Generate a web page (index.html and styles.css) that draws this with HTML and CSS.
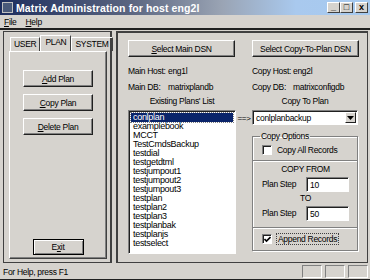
FILE: index.html
```html
<!DOCTYPE html>
<html lang="en">
<head>
    <meta charset="UTF-8">
    <title>Matrix Administration</title>
    <link rel="stylesheet" href="styles.css">
</head>
<body>
<div class="window">
    <div class="titlebar">
        <span class="app-icon"></span>
        <span class="title">Matrix Administration for host eng2l</span>
        <span class="controls">
            <span class="ctl">_</span><span class="ctl">&#9633;</span><span class="ctl ctl-close">x</span>
        </span>
    </div>
    <div class="menubar">
        <span><u>F</u>ile</span>
        <span><u>H</u>elp</span>
    </div>
    <div class="main">
        <div class="left-panel">
            <div class="tabs">
                <span class="tab">USER</span>
                <span class="tab active">PLAN</span>
                <span class="tab">SYSTEM</span>
            </div>
            <div class="tab-body">
                <div class="btn-stack">
                    <button class="btn"><u>A</u>dd Plan</button>
                    <button class="btn"><u>C</u>opy Plan</button>
                    <button class="btn"><u>D</u>elete Plan</button>
                </div>
                <button class="btn btn-exit">E<u>x</u>it</button>
            </div>
        </div>
        <div class="right-panel">
            <div class="col col-main">
                <button class="btn btn-dsn"><u>S</u>elect Main DSN</button>
                <div class="info"><span class="lbl">Main Host:</span><span>eng1l</span></div>
                <div class="info"><span class="lbl">Main DB:</span><span>matrixplandb</span></div>
                <div class="caption">Existing Plans' List</div>
                <div class="listbox">
                    <div class="item selected">conlplan</div>
                    <div class="item">examplebook</div>
                    <div class="item">MCCT</div>
                    <div class="item">TestCmdsBackup</div>
                    <div class="item">testdial</div>
                    <div class="item">testgetdtml</div>
                    <div class="item">testjumpout1</div>
                    <div class="item">testjumpout2</div>
                    <div class="item">testjumpout3</div>
                    <div class="item">testplan</div>
                    <div class="item">testplan2</div>
                    <div class="item">testplan3</div>
                    <div class="item">testplanbak</div>
                    <div class="item">testplanjs</div>
                    <div class="item">testselect</div>
                </div>
            </div>
            <div class="arrow">==&gt;</div>
            <div class="col col-copy">
                <button class="btn btn-dsn">Select Copy-To-Plan DSN</button>
                <div class="info"><span class="lbl lbl-copy">Copy Host:</span><span>eng2l</span></div>
                <div class="info"><span class="lbl lbl-copy">Copy DB:</span><span>matrixconfigdb</span></div>
                <div class="caption">Copy To Plan</div>
                <div class="combo">
                    <span class="combo-text">conlplanbackup</span>
                    <span class="combo-btn"><svg width="7" height="4" viewBox="0 0 7 4"><path d="M0 0h7L3.5 4z" fill="#000"/></svg></span>
                </div>
                <fieldset class="group">
                    <legend>Copy Options</legend>
                    <label class="check"><span class="box"></span>Copy All Records</label>
                    <div class="inner">
                        <div class="inner-title">COPY FROM</div>
                        <div class="step"><span>Plan Step</span><span class="field">10</span></div>
                        <div class="inner-title">TO</div>
                        <div class="step"><span>Plan Step</span><span class="field">50</span></div>
                    </div>
                    <label class="check check-append"><span class="box"><svg width="7" height="7" viewBox="0 0 7 7"><path d="M0.5 3l2 2 4-4" fill="none" stroke="#000" stroke-width="1.6"/></svg></span><span class="focus">Append Records</span></label>
                </fieldset>
            </div>
        </div>
    </div>
    <div class="statusbar">
        <span class="status-text">For Help, press F1</span>
        <span class="pane"></span><span class="pane"></span><span class="pane"></span>
    </div>
</div>
</body>
</html>
```
FILE: styles.css
```css
body {
    margin: 0;
    font-family: "Liberation Sans", Arial, sans-serif;
    font-size: 8.5px;
    color: #000;
}
.window {
    width: 370px;
    height: 280px;
    background-color: #d6d3ce;
    display: flex;
    flex-direction: column;
    overflow: hidden;
    box-sizing: border-box;
    border-bottom: 1px solid #202020;
    white-space: nowrap;
    letter-spacing: -0.3px;
}
.titlebar {
    flex-shrink: 0;
    height: 15px;
    display: flex;
    align-items: center;
    padding: 0 2px;
    background: linear-gradient(to right, #1d2d5e, #5a6580 35%, #9aa4b4 60%, #a9c9ee 80%, #a6caf0);
    color: #fff;
    font-weight: bold;
    font-size: 10.5px;
    letter-spacing: 0.1px;
}
.app-icon {
    width: 11px;
    height: 11px;
    background: #4a5a7a;
    border: 1px solid #c0c0c0;
    box-sizing: border-box;
    margin-right: 3px;
}
.title {
    flex: 1;
}
.controls {
    display: flex;
}
.ctl {
    width: 13px;
    height: 11px;
    background: #d6d3ce;
    border: 1px solid;
    border-color: #fff #404040 #404040 #fff;
    box-sizing: border-box;
    color: #000;
    font-size: 9px;
    line-height: 8px;
    text-align: center;
}
.ctl-close {
    margin-left: 2px;
}
.menubar {
    flex-shrink: 0;
    height: 13px;
    display: flex;
    align-items: center;
    gap: 9px;
    padding-left: 4px;
    border-bottom: 2px solid #202020;
}
.main {
    flex: 1;
    min-height: 0;
    display: flex;
    gap: 4px;
    padding: 1px 2px 1px 3px;
}
.left-panel {
    width: 109px;
    flex-shrink: 0;
    border: 1px solid #404040;
    border-right-width: 2px;
    box-sizing: border-box;
    padding: 4px 3px 3px 5px;
    display: flex;
    flex-direction: column;
}
.tabs {
    display: flex;
    height: 15px;
    align-items: flex-end;
    padding-left: 1px;
}
.tab {
    height: 13px;
    padding: 0 3px;
    border: 1px solid #fff;
    border-right-color: #404040;
    border-bottom: none;
    line-height: 13px;
}
.tab.active {
    height: 15px;
    padding: 0 4px;
}
.tab-body {
    flex: 1;
    border: 1px solid #404040;
    border-top-color: #fff;
    border-left-color: #fff;
    box-shadow: inset -1px -1px 0 #808080;
    display: flex;
    flex-direction: column;
    align-items: center;
    padding-top: 18px;
    padding-bottom: 3px;
}
.btn-stack {
    display: flex;
    flex-direction: column;
    gap: 7px;
    flex: 1;
}
.btn {
    font-family: inherit;
    font-size: 8.5px;
    letter-spacing: -0.3px;
    height: 17px;
    width: 70px;
    padding: 0;
    background: #d6d3ce;
    border: 1px solid;
    border-color: #fff #202020 #202020 #fff;
    box-shadow: inset -1px -1px 0 #808080;
    color: #000;
    white-space: nowrap;
}
.btn-exit {
    width: 51px;
    height: 16px;
    border: 1px solid #000;
    box-shadow: inset 1px 1px 0 #fff, inset -1px -1px 0 #808080;
}
.right-panel {
    flex: 1;
    display: flex;
    border: 1px solid #404040;
    border-left-width: 2px;
    border-top-width: 2px;
    box-sizing: border-box;
    padding: 7px 9px 8px 10px;
}
.col {
    display: flex;
    flex-direction: column;
    width: 108px;
}
.btn-dsn {
    width: 107px;
    height: 17px;
    margin-bottom: 6px;
    flex-shrink: 0;
}
.info {
    display: flex;
    height: 16px;
    flex-shrink: 0;
    align-items: center;
}
.lbl {
    width: 40px;
    flex-shrink: 0;
}
.lbl-copy {
    width: 41px;
}
.caption {
    text-align: center;
    height: 15px;
    line-height: 13px;
    flex-shrink: 0;
}
.listbox {
    flex: 1;
    min-height: 0;
    background: #fff;
    border: 1px solid;
    border-color: #808080 #fff #fff #808080;
    box-shadow: inset 1px 1px 0 #202020;
    padding: 2px 0 0 2px;
    line-height: 9px;
    font-size: 9px;
    overflow: hidden;
}
.item {
    padding-left: 2px;
    height: 9px;
}
.item.selected {
    background: #0a246a;
    color: #fff;
    outline: 1px dotted #808080;
    margin-right: 2px;
}
.arrow {
    width: 16px;
    padding-top: 74px;
    text-align: center;
    font-size: 8px;
}
.col-copy {
    width: 106px;
}
.combo {
    display: flex;
    flex-shrink: 0;
    height: 15px;
    background: #fff;
    border: 1px solid;
    border-color: #808080 #fff #fff #808080;
    box-shadow: inset 1px 1px 0 #202020;
    box-sizing: border-box;
    align-items: center;
    padding: 1px 1px 1px 3px;
    margin-bottom: 5px;
}
.combo-text {
    flex: 1;
}
.combo-btn {
    width: 11px;
    height: 11px;
    box-sizing: border-box;
    background: #d6d3ce;
    border: 1px solid;
    border-color: #fff #202020 #202020 #fff;
    display: flex;
    align-items: center;
    justify-content: center;
}
.group {
    flex: 1;
    min-height: 0;
    margin: 0 0 3px 0;
    padding: 0;
    border: 1px solid #808080;
    box-shadow: 1px 1px 0 #fff, inset 1px 1px 0 #fff;
    display: flex;
    flex-direction: column;
}
.group legend {
    padding: 0 1px;
    margin-left: 7px;
    line-height: 12px;
}
.check {
    display: flex;
    align-items: center;
    gap: 5px;
    padding-left: 9px;
    height: 12px;
    margin-top: 2px;
}
.box {
    width: 10px;
    height: 10px;
    background: #fff;
    border: 1px solid;
    border-color: #808080 #fff #fff #808080;
    box-shadow: inset 1px 1px 0 #202020;
    box-sizing: border-box;
    display: flex;
    align-items: center;
    justify-content: center;
}
.inner {
    margin-top: 4px;
    border-top: 1px solid #808080;
    border-bottom: 1px solid #808080;
    box-shadow: 0 1px 0 #fff, inset 0 1px 0 #fff;
    display: flex;
    flex-direction: column;
    padding: 2px 8px 6px 9px;
}
.inner-title {
    text-align: center;
    height: 13px;
    line-height: 13px;
}
.step {
    display: flex;
    justify-content: space-between;
    align-items: center;
    height: 16px;
}
.field {
    width: 43px;
    height: 15px;
    box-sizing: border-box;
    background: #fff;
    border: 1px solid;
    border-color: #808080 #fff #fff #808080;
    box-shadow: inset 1px 1px 0 #202020;
    padding: 2px 0 0 3px;
}
.check-append {
    flex: 1;
    margin-top: 0;
}
.focus {
    outline: 1px dotted #404040;
    padding: 0 1px;
}
.statusbar {
    flex-shrink: 0;
    height: 15px;
    display: flex;
    align-items: center;
    padding: 0 2px 0 3px;
    gap: 3px;
}
.status-text {
    flex: 1;
}
.pane {
    width: 18px;
    height: 11px;
    border: 1px solid;
    border-color: #808080 #fff #fff #808080;
}
```
